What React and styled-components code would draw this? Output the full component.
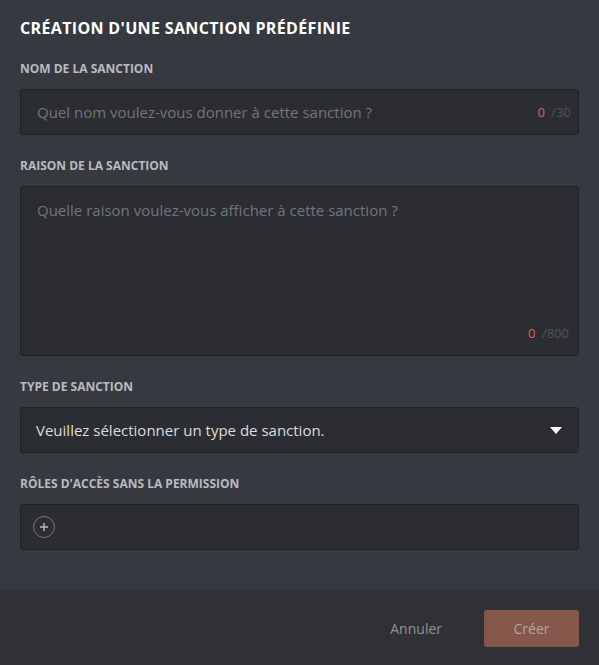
import React from "react";
import styled, { createGlobalStyle } from "styled-components";

const GlobalStyle = createGlobalStyle`
  html, body {
    margin: 0;
    padding: 0;
    background: #36393f;
  }
  body {
    font-family: "Open Sans", "Noto Sans", sans-serif;
  }
`;

const fields = [
  {
    label: "Nom de la sanction",
    kind: "input",
    placeholder: "Quel nom voulez-vous donner à cette sanction ?",
    max: 30,
  },
  {
    label: "Raison de la sanction",
    kind: "textarea",
    placeholder: "Quelle raison voulez-vous afficher à cette sanction ?",
    max: 800,
  },
  {
    label: "Type de sanction",
    kind: "select",
    value: "Veuillez sélectionner un type de sanction.",
  },
  { label: "Rôles d'accès sans la permission", kind: "roles" },
];

const App = () => {
  return (
    <>
      <GlobalStyle />
      <Modal>
        <Body>
          <Title>Création d'une sanction prédéfinie</Title>
          {fields.map((f) => (
            <Section key={f.label}>
              <Label>{f.label}</Label>
              {f.kind === "input" && (
                <InputBox>
                  <Placeholder>{f.placeholder}</Placeholder>
                  <Counter>
                    <Count>0</Count> /{f.max}
                  </Counter>
                </InputBox>
              )}
              {f.kind === "textarea" && (
                <TextBox>
                  <Placeholder>{f.placeholder}</Placeholder>
                  <Counter>
                    <Count>0</Count> /{f.max}
                  </Counter>
                </TextBox>
              )}
              {f.kind === "select" && (
                <SelectBox>
                  <SelectText>{f.value}</SelectText>
                  <svg width="12" height="7" viewBox="0 0 12 7">
                    <path d="M0 0 H12 L6 7 Z" fill="#ffffff" />
                  </svg>
                </SelectBox>
              )}
              {f.kind === "roles" && (
                <RolesBox>
                  <AddButton>
                    <svg width="10" height="10" viewBox="0 0 10 10">
                      <path
                        d="M5 1 V9 M1 5 H9"
                        stroke="#b9bbbe"
                        strokeWidth="1.4"
                      />
                    </svg>
                  </AddButton>
                </RolesBox>
              )}
            </Section>
          ))}
        </Body>
        <Footer>
          <CancelButton>Annuler</CancelButton>
          <CreateButton>Créer</CreateButton>
        </Footer>
      </Modal>
    </>
  );
};

export default App;

const Modal = styled.div`
  width: 599px;
  height: 665px;
  background: #36393f;
  display: flex;
  flex-direction: column;
`;

const Body = styled.div`
  flex: 1;
  padding: 18px 20px 0 20px;
`;

const Title = styled.h2`
  margin: 0 0 23px 0;
  font-size: 16px;
  line-height: 20px;
  font-weight: 700;
  color: #ffffff;
  text-transform: uppercase;
  letter-spacing: 0.35px;
`;

const Section = styled.div`
  margin-bottom: 23px;
`;

const Label = styled.div`
  font-size: 12px;
  line-height: 16px;
  font-weight: 700;
  color: #b9bbbe;
  text-transform: uppercase;
  margin-bottom: 12px;
`;

const Field = styled.div`
  box-sizing: border-box;
  background: #2b2d32;
  border: 1px solid #1f2124;
  border-radius: 3px;
`;

const InputBox = styled(Field)`
  height: 46px;
  display: flex;
  align-items: center;
  justify-content: space-between;
  padding: 0 7px 0 16px;
`;

const TextBox = styled(Field)`
  height: 170px;
  display: flex;
  flex-direction: column;
  justify-content: space-between;
  align-items: flex-start;
  padding: 13px 9px 13px 16px;
`;

const Placeholder = styled.span`
  font-size: 15px;
  line-height: 20px;
  color: #72767d;
`;

const Counter = styled.span`
  font-size: 13px;
  line-height: 18px;
  color: #4f545c;
  align-self: flex-end;
  ${InputBox} & {
    align-self: center;
  }
`;

const Count = styled.span`
  color: #d9694f;
  margin-right: 3px;
`;

const SelectBox = styled(Field)`
  height: 46px;
  display: flex;
  align-items: center;
  justify-content: space-between;
  padding: 0 16px 0 15px;
`;

const SelectText = styled.span`
  font-size: 15px;
  color: #dcddde;
`;

const RolesBox = styled(Field)`
  height: 46px;
  display: flex;
  align-items: center;
  padding: 0 12px;
`;

const AddButton = styled.div`
  box-sizing: border-box;
  width: 22px;
  height: 22px;
  border-radius: 50%;
  border: 1px solid #72767d;
  display: flex;
  align-items: center;
  justify-content: center;
`;

const Footer = styled.div`
  height: 75px;
  box-sizing: border-box;
  background: #2f3136;
  display: flex;
  align-items: center;
  justify-content: flex-end;
  padding: 2px 20px 0 20px;
  gap: 42px;
`;

const CancelButton = styled.button`
  background: none;
  border: none;
  padding: 0;
  font-family: inherit;
  font-size: 14px;
  color: #8e9297;
`;

const CreateButton = styled.button`
  width: 95px;
  height: 37px;
  border: none;
  border-radius: 3px;
  background: #86574b;
  color: #b3a6a2;
  font-family: inherit;
  font-size: 14px;
`;
